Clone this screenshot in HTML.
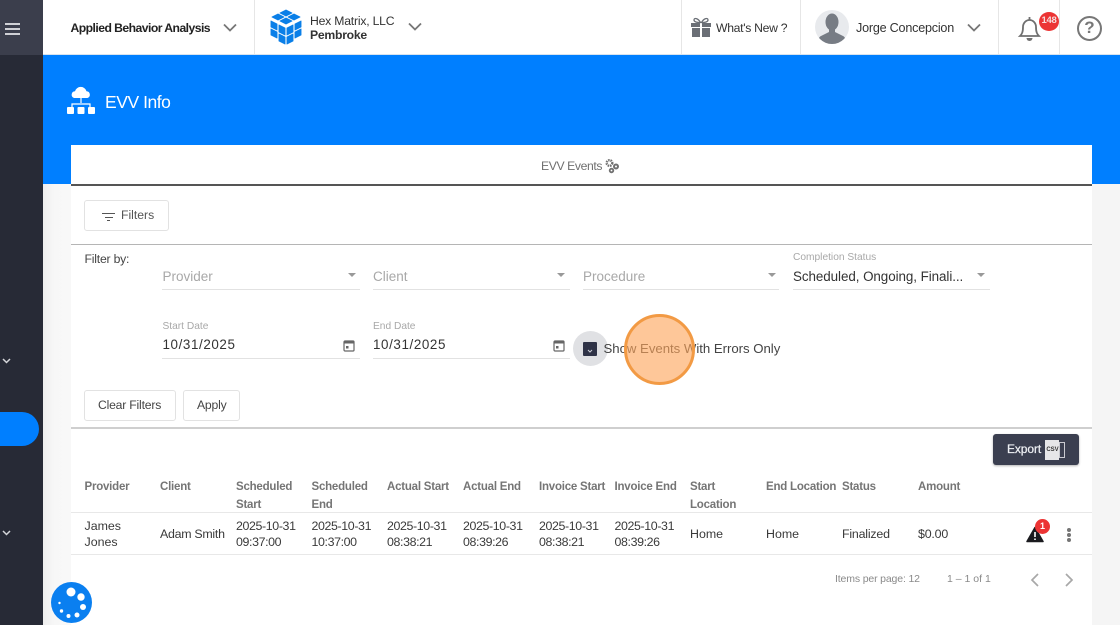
<!DOCTYPE html>
<html><head><meta charset="utf-8"><style>
html,body{margin:0;padding:0}
body{width:1120px;height:625px;overflow:hidden;position:relative;background:#f5f5f5;font-family:"Liberation Sans",sans-serif;color:#333}
div,span.a,svg{position:absolute}
.t{position:absolute;white-space:nowrap;line-height:16px;font-size:12.4px;color:#3a3a3a}
.h{font-weight:bold;color:#757575;font-size:11.5px;letter-spacing:-.22px}
.d{letter-spacing:-.38px}
.v{position:absolute;top:0;width:1px;height:55px;background:#e6e6e6}
.line{position:absolute;height:1px;background:#d9d9d9}
.ph{font-size:13.5px;color:#a8a8a8}
.val{font-size:13.4px;color:#333}
.dt{font-size:13.4px;letter-spacing:.6px;color:#333}
.lab{font-size:10.2px;color:#a8a8a8}
.arr{position:absolute;width:0;height:0;border-left:4.5px solid transparent;border-right:4.5px solid transparent;border-top:4.5px solid #999}
.btn{position:absolute;background:#fff;border:1px solid #e2e2e2;border-radius:3px;box-sizing:border-box}
</style></head><body>
<div style="left:43px;top:184px;width:28px;height:441px;background:linear-gradient(90deg,#eee,#f7f7f7 40%,#f8f8f8)"></div>
<div style="left:43px;top:55px;width:1077px;height:129px;background:#007fff"></div>
<div style="left:0;top:0;width:43px;height:625px;background:#272a36"></div>
<div style="left:0;top:0;width:43px;height:55px;background:#3b3e4c"></div>
<div style="left:5px;top:23px;width:15px;height:1.600px;background:#cfd0d5"></div>
<div style="left:5px;top:28px;width:15px;height:1.600px;background:#cfd0d5"></div>
<div style="left:5px;top:33px;width:15px;height:1.600px;background:#cfd0d5"></div>
<svg style="left:1px;top:355px" width="12" height="12" viewBox="0 0 12 12"><path d="M2 4l3.500 3.500L9 4" fill="none" stroke="#d5d6da" stroke-width="1.500"/></svg>
<svg style="left:1px;top:527px" width="12" height="12" viewBox="0 0 12 12"><path d="M2 4l3.500 3.500L9 4" fill="none" stroke="#d5d6da" stroke-width="1.500"/></svg>
<div style="left:0;top:412px;width:39px;height:34px;background:#007fff;border-radius:0 17px 17px 0"></div>

<!-- top bar -->
<div style="left:43px;top:0;width:1077px;height:55px;background:#fff"></div>
<div class="v" style="left:254px"></div><div class="v" style="left:681px"></div><div class="v" style="left:800px"></div><div class="v" style="left:998px"></div><div class="v" style="left:1059px"></div>
<span class="t" style="left:70.500px;top:20px;font-weight:bold;font-size:12.200px;letter-spacing:-.55px;color:#222">Applied Behavior Analysis</span>
<svg style="left:222px;top:21px" width="16" height="14" viewBox="0 0 16 14"><path d="M2 3.500l6 6 6-6" fill="none" stroke="#777" stroke-width="1.800"/></svg>
<svg style="left:269px;top:9px" width="34" height="37" viewBox="0 0 34 37" fill="#0a7fe8" stroke="#0a7fe8" stroke-width=".9" stroke-linejoin="round"><path d="M17 1l6 3-6 3-6-3zM9 5l6 3-6 3-6-3zM25 5l6 3-6 3-6-3zM17 9l6 3-6 3-6-3z"/><path d="M2 12l6 3v6l-6-3zM32 12l-6 3v6l6-3zM2 20l6 3v6l-6-3zM32 20l-6 3v6l6-3zM10 16l6 3v7l-6-3zM24 16l-6 3v7l6-3zM10 25l6 3v7l-6-3zM24 25l-6 3v7l6-3z"/></svg>
<span class="t" style="left:310px;top:13px;font-size:12.200px;letter-spacing:-.2px;color:#333">Hex Matrix, LLC</span>
<span class="t" style="left:310px;top:27px;font-size:12.200px;font-weight:bold;letter-spacing:-.25px;color:#333">Pembroke</span>
<svg style="left:407px;top:20px" width="16" height="14" viewBox="0 0 16 14"><path d="M2 3.500l6 6 6-6" fill="none" stroke="#777" stroke-width="1.800"/></svg>
<svg style="left:690px;top:17px" width="22" height="21" viewBox="0 0 22 21" fill="#6b6f76"><path d="M1 6h9v4H1zM12 6h9v4h-9zM2 11h8v9H2zM12 11h8v9h-8z"/><path d="M10.500 5.500C8 1 4 .5 4 3c0 2 3 2.500 6.500 2.500zM11.500 5.500C14 1 18 .5 18 3c0 2-3 2.500-6.500 2.500z" fill="none" stroke="#6b6f76" stroke-width="1.300"/></svg>
<span class="t" style="left:716px;top:20px;font-size:12.200px;letter-spacing:-.3px;color:#333">What's New ?</span>
<div style="left:815px;top:10px;width:34px;height:34px;border-radius:50%;background:#e8eaed;overflow:hidden">
<svg style="left:0;top:0" width="34" height="34" viewBox="0 0 34 34" fill="#777c84"><ellipse cx="17" cy="12" rx="6.500" ry="8.500"/><path d="M14 18h6v4l8 4c2 1 3 3 3 8H3c0-5 1-7 3-8l8-4z"/></svg></div>
<span class="t" style="left:856px;top:20px;font-size:12.600px;letter-spacing:-.22px;color:#333">Jorge Concepcion</span>
<svg style="left:966px;top:21px" width="16" height="14" viewBox="0 0 16 14"><path d="M2 3.500l6 6 6-6" fill="none" stroke="#777" stroke-width="1.800"/></svg>
<svg style="left:1017px;top:16px" width="25" height="26" viewBox="0 0 25 26"><path d="M3 20c2-2 3-4 3-9 0-4 3-7 6.500-7S19 7 19 11c0 5 1 7 3 9z" fill="none" stroke="#707070" stroke-width="1.800"/><path d="M9.500 22a3 3 0 0 0 6 0z" fill="#707070"/><path d="M12.500 1v3" stroke="#707070" stroke-width="1.800"/></svg>
<div style="left:1039px;top:12px;width:20px;height:19px;border-radius:50%;background:#ec3434"></div>
<span class="t" style="left:1040px;top:13px;width:18px;text-align:center;font-size:9.500px;font-weight:bold;letter-spacing:-.3px;color:#f6dcdc">148</span>
<div style="left:1077px;top:16px;width:21px;height:21px;border:2px solid #777;border-radius:50%"></div>
<span class="t" style="left:1077px;top:20px;width:25px;text-align:center;font-size:17px;font-weight:bold;color:#777">?</span>
<div style="left:43px;top:54px;width:1077px;height:1px;background:#d7e3ef"></div>

<!-- header -->
<svg style="left:67px;top:86px" width="28" height="28" viewBox="0 0 28 28" fill="#fff"><path d="M7 12a3.500 3.500 0 0 1 1-6.800 6 6 0 0 1 11.500 0 3.500 3.500 0 0 1 1 6.800z"/><path d="M14 12v5M5 21v-3h18v3" fill="none" stroke="#fff" stroke-width="1.200"/><rect x="0" y="21" width="7" height="7" rx="1"/><rect x="10.500" y="21" width="7" height="7" rx="1"/><rect x="21" y="21" width="7" height="7" rx="1"/></svg>
<span class="t" style="left:105px;top:92px;font-size:17.500px;line-height:20px;letter-spacing:-.45px;color:#fff">EVV Info</span>

<!-- card -->
<div style="left:71px;top:145px;width:1021px;height:480px;background:#fff"></div>
<div style="left:71px;top:184px;width:1021px;height:2px;background:#555"></div>
<span class="t" style="left:541px;top:158px;font-size:12.200px;letter-spacing:-.4px;color:#707070">EVV Events</span>
<svg style="left:604px;top:158px" width="16" height="16" viewBox="0 0 16 16" fill="none" stroke="#707070"><circle cx="5.500" cy="5" r="2.800" stroke-width="2.400" stroke-dasharray="1.500 .8"/><circle cx="12" cy="8.500" r="2" stroke-width="2"/><circle cx="7.500" cy="12.500" r="1.800" stroke-width="1.800"/></svg>

<div class="btn" style="left:84px;top:200px;width:85px;height:31px"></div>
<div style="left:102px;top:213px;width:13px;height:1.300px;background:#555"></div>
<div style="left:104.500px;top:216.500px;width:8px;height:1.300px;background:#555"></div>
<div style="left:107px;top:220px;width:3px;height:1.300px;background:#555"></div>
<span class="t" style="left:121px;top:207px;font-size:12.200px;color:#555">Filters</span>
<div class="line" style="left:71px;top:244px;width:1021px;background:#b5b5b5"></div>
<span class="t" style="left:84.500px;top:251px;font-size:12.200px;letter-spacing:-.2px;color:#444">Filter by:</span>

<span class="t ph" style="left:162.500px;top:268.500px">Provider</span><div class="arr" style="left:347.500px;top:273px"></div><div class="line" style="left:162px;top:289px;width:198px;background:#e2e2e2"></div>
<span class="t ph" style="left:373px;top:268.500px">Client</span><div class="arr" style="left:556.500px;top:273px"></div><div class="line" style="left:373px;top:289px;width:197px;background:#e2e2e2"></div>
<span class="t ph" style="left:583px;top:268.500px">Procedure</span><div class="arr" style="left:767.500px;top:273px"></div><div class="line" style="left:583px;top:289px;width:196px;background:#e2e2e2"></div>
<span class="t lab" style="left:793px;top:250px">Completion Status</span>
<span class="t val" style="left:793px;top:268.500px;letter-spacing:-.06px">Scheduled, Ongoing, Finali...</span><div class="arr" style="left:976.500px;top:273px"></div><div class="line" style="left:793px;top:289px;width:197px;background:#e2e2e2"></div>

<span class="t lab" style="left:162.500px;top:319px">Start Date</span>
<span class="t dt" style="left:162.500px;top:337px">10/31/2025</span>
<svg style="left:343px;top:339px" width="12" height="13" viewBox="0 0 12 13" fill="none"><rect x="1" y="2" width="10" height="10" rx="1" stroke="#666" stroke-width="1.200"/><rect x="1" y="2" width="10" height="2.500" fill="#666"/><rect x="3" y="7" width="2.500" height="2.500" fill="#666"/></svg>
<div class="line" style="left:162px;top:358px;width:198px;background:#e2e2e2"></div>
<span class="t lab" style="left:373px;top:319px">End Date</span>
<span class="t dt" style="left:373px;top:337px">10/31/2025</span>
<svg style="left:553px;top:339px" width="12" height="13" viewBox="0 0 12 13" fill="none"><rect x="1" y="2" width="10" height="10" rx="1" stroke="#666" stroke-width="1.200"/><rect x="1" y="2" width="10" height="2.500" fill="#666"/><rect x="3" y="7" width="2.500" height="2.500" fill="#666"/></svg>
<div class="line" style="left:373px;top:358px;width:197px;background:#e2e2e2"></div>

<div style="left:573px;top:331px;width:35px;height:35px;border-radius:50%;background:#e0e1e4"></div>
<div style="left:583px;top:342px;width:14px;height:14px;border-radius:1px;background:#2f3347"></div>
<svg style="left:583px;top:343px" width="14" height="13" viewBox="0 0 14 13"><path d="M5 7l2 2 2-2" fill="none" stroke="#d0d2da" stroke-width="1"/></svg>
<span class="t" style="left:603.500px;top:341px;font-size:13.200px;letter-spacing:-.02px;color:#444">Show Events With Errors Only</span>

<div class="btn" style="left:84px;top:390px;width:92px;height:31px"></div>
<span class="t" style="left:98px;top:397px;font-size:12.200px;letter-spacing:-.2px;color:#444">Clear Filters</span>
<div class="btn" style="left:183px;top:390px;width:57px;height:31px"></div>
<span class="t" style="left:197px;top:397px;font-size:12.200px;letter-spacing:-.2px;color:#444">Apply</span>
<div class="line" style="left:71px;top:427px;width:1021px;height:2px;background:#cfcfcf"></div>

<div style="left:993px;top:434px;width:86px;height:31px;background:#3b3f50;border-radius:3px;box-shadow:0 1px 2px rgba(0,0,0,.3)"></div>
<span class="t" style="left:1007px;top:441px;font-size:12px;letter-spacing:-.1px;-webkit-text-stroke:.25px #eceef2;color:#eceef2">Export</span>
<div style="left:1045px;top:440px;width:14px;height:20px;background:#e6e6e8"></div>
<div style="left:1059px;top:442px;width:6px;height:16px;border:1px solid #c9cad0;box-sizing:border-box"></div>
<span class="t" style="left:1045px;top:444px;width:15px;text-align:center;font-size:6px;line-height:12px;font-weight:bold;color:#333">CSV</span>

<!-- table head -->
<span class="t h" style="left:84.500px;top:479px">Provider</span>
<span class="t h" style="left:160px;top:479px">Client</span>
<span class="t h" style="left:236px;top:479px">Scheduled</span><span class="t h" style="left:236px;top:497px">Start</span>
<span class="t h" style="left:311.500px;top:479px">Scheduled</span><span class="t h" style="left:311.500px;top:497px">End</span>
<span class="t h" style="left:387px;top:479px">Actual Start</span>
<span class="t h" style="left:463px;top:479px">Actual End</span>
<span class="t h" style="left:539px;top:479px">Invoice Start</span>
<span class="t h" style="left:614.500px;top:479px">Invoice End</span>
<span class="t h" style="left:690px;top:479px">Start</span><span class="t h" style="left:690px;top:497px">Location</span>
<span class="t h" style="left:766px;top:479px">End Location</span>
<span class="t h" style="left:842px;top:479px">Status</span>
<span class="t h" style="left:918px;top:479px">Amount</span>
<div class="line" style="left:71px;top:512px;width:1021px;background:#e8e8e8"></div>

<!-- row -->
<span class="t" style="left:84.500px;top:518px">James</span><span class="t" style="left:84.500px;top:534px">Jones</span>
<span class="t" style="left:160px;top:526px;letter-spacing:-.28px">Adam Smith</span>
<span class="t d" style="left:236px;top:518px">2025-10-31</span><span class="t d" style="left:236px;top:534px">09:37:00</span>
<span class="t d" style="left:311.500px;top:518px">2025-10-31</span><span class="t d" style="left:311.500px;top:534px">10:37:00</span>
<span class="t d" style="left:387px;top:518px">2025-10-31</span><span class="t d" style="left:387px;top:534px">08:38:21</span>
<span class="t d" style="left:463px;top:518px">2025-10-31</span><span class="t d" style="left:463px;top:534px">08:39:26</span>
<span class="t d" style="left:539px;top:518px">2025-10-31</span><span class="t d" style="left:539px;top:534px">08:38:21</span>
<span class="t d" style="left:614.500px;top:518px">2025-10-31</span><span class="t d" style="left:614.500px;top:534px">08:39:26</span>
<span class="t" style="left:690px;top:526px">Home</span>
<span class="t" style="left:766px;top:526px">Home</span>
<span class="t" style="left:842px;top:526px;letter-spacing:-.2px">Finalized</span>
<span class="t" style="left:918px;top:526px;letter-spacing:-.2px">$0.00</span>
<svg style="left:1026px;top:526px" width="18" height="17" viewBox="0 0 18 17"><path d="M9 1.500L17 15.500H1z" fill="#1b1b1f" stroke="#1b1b1f" stroke-width="1.500" stroke-linejoin="round"/><path d="M9 6v5M9 12.500v1.500" stroke="#fff" stroke-width="1.600"/></svg>
<div style="left:1035px;top:519px;width:15px;height:15px;border-radius:50%;background:#ec3434"></div>
<span class="t" style="left:1035px;top:519px;width:15px;text-align:center;font-size:9px;line-height:15px;font-weight:bold;color:#fff">1</span>
<div style="left:1066.500px;top:528px;width:4px;height:4px;border-radius:50%;background:#757575"></div>
<div style="left:1066.500px;top:533px;width:4px;height:4px;border-radius:50%;background:#757575"></div>
<div style="left:1066.500px;top:538px;width:4px;height:4px;border-radius:50%;background:#757575"></div>
<div class="line" style="left:71px;top:554px;width:1021px;background:#e8e8e8"></div>

<span class="t" style="left:835px;top:571px;font-size:10.500px;letter-spacing:-.15px;color:#8a8a8a">Items per page: 12</span>
<span class="t" style="left:947px;top:571px;font-size:10.500px;color:#8a8a8a">1 – 1 of 1</span>
<svg style="left:1028px;top:572px" width="14" height="16" viewBox="0 0 14 16"><path d="M10 2L4 8l6 6" fill="none" stroke="#a8a8a8" stroke-width="1.700"/></svg>
<svg style="left:1062px;top:572px" width="14" height="16" viewBox="0 0 14 16"><path d="M4 2l6 6-6 6" fill="none" stroke="#a8a8a8" stroke-width="1.700"/></svg>

<!-- orange highlight -->
<div style="left:624px;top:314px;width:71px;height:71px;box-sizing:border-box;border-radius:50%;background:rgba(253,165,90,.62);border:3px solid #f29a44"></div>

<!-- floating button -->
<div style="left:51px;top:582px;width:41px;height:41px;border-radius:50%;background:#0a7ff0"></div>
<svg style="left:51px;top:582px" width="41" height="41" viewBox="0 0 41 41" fill="#fff"><circle cx="20" cy="10" r="4.500"/><circle cx="30" cy="15" r="3.700"/><circle cx="32" cy="25" r="3"/><circle cx="26" cy="33" r="2.500"/><circle cx="17.500" cy="34" r="2"/><circle cx="10.500" cy="29" r="1.700"/><circle cx="8.500" cy="21" r="1.200"/></svg>
</body></html>
